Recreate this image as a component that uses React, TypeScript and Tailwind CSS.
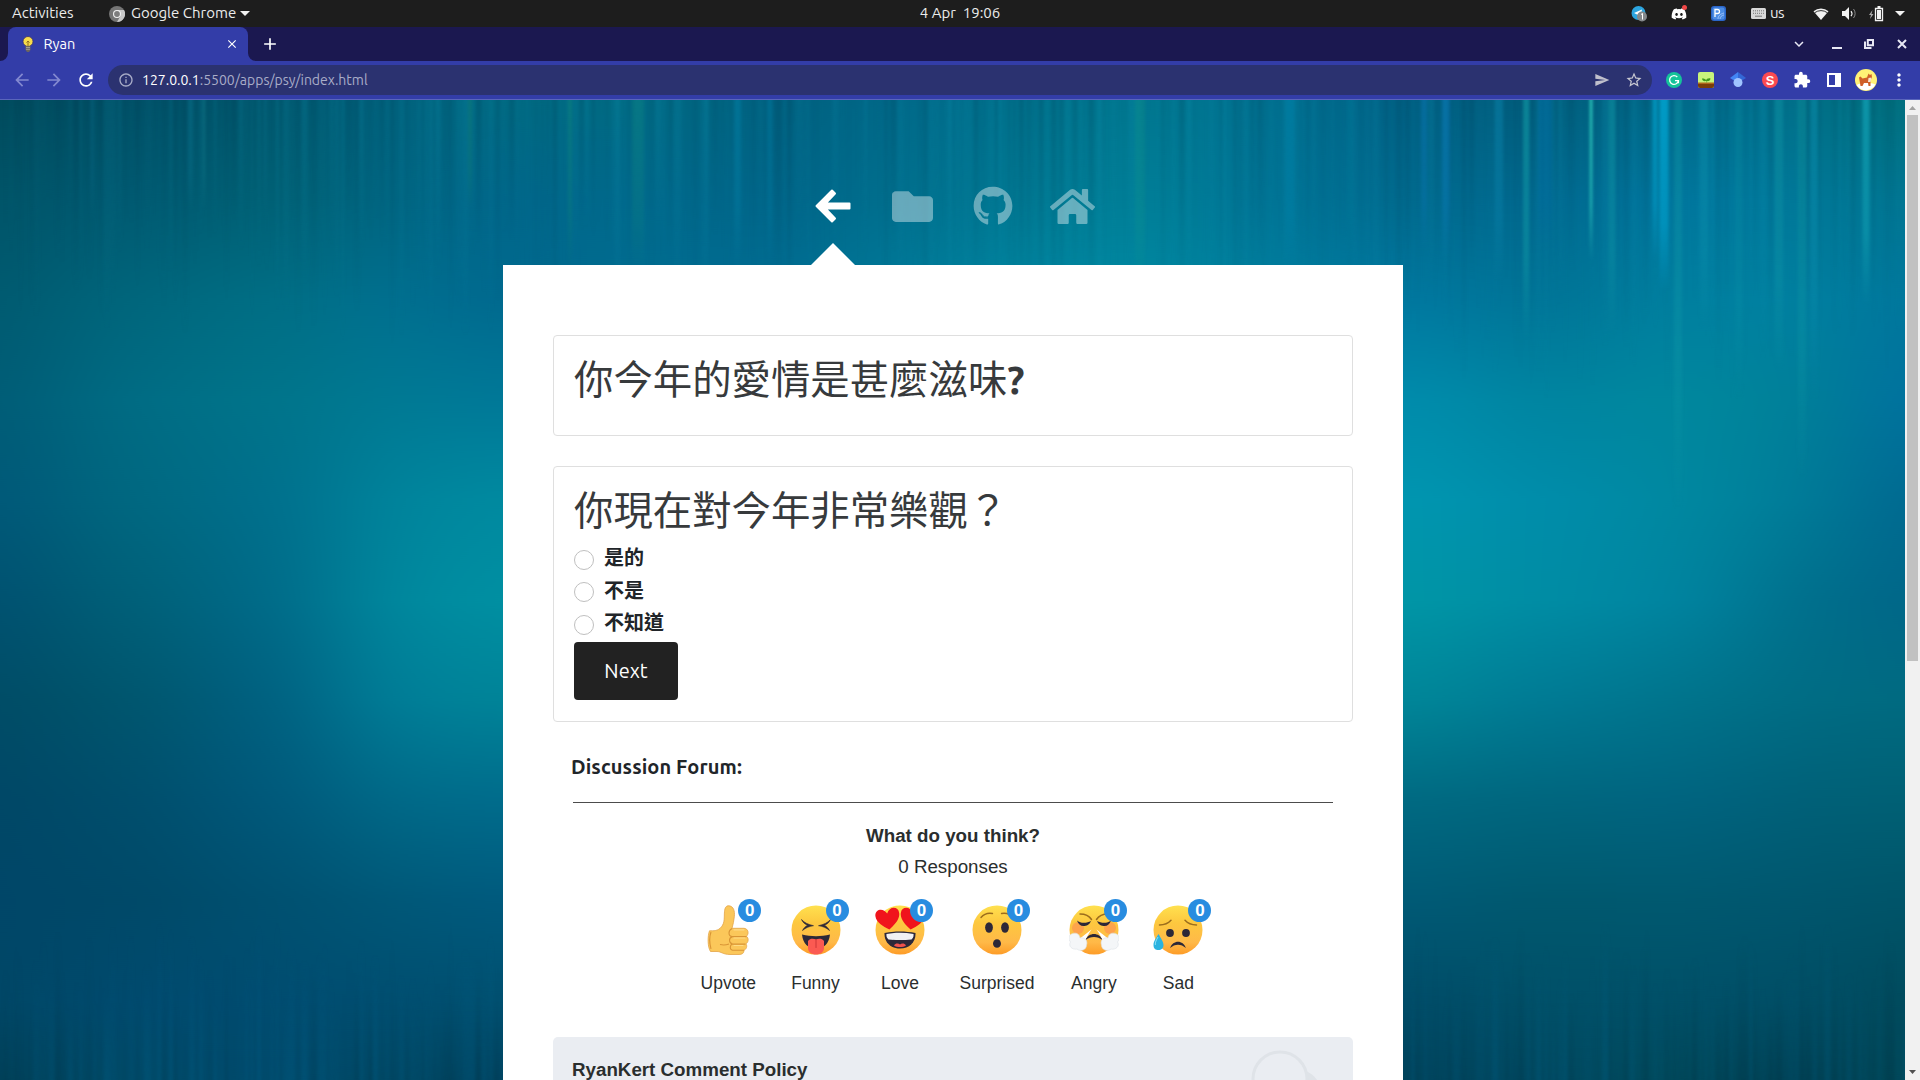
import React from "react";
import { FaFolder, FaGithub, FaHome, FaDiscord } from "react-icons/fa";
import {
  MdArrowBack,
  MdArrowForward,
  MdRefresh,
  MdInfoOutline,
  MdSend,
  MdStarBorder,
  MdExtension,
  MdClose,
  MdAdd,
  MdMoreVert,
  MdExpandMore,
} from "react-icons/md";

const STOPS = [0, 100, 200, 300, 400, 500, 600, 700, 800, 900, 980];

// Colour field of the wallpaper: x position, then one colour per vertical stop.
const FIELD: [number, string][] = [
  [0, "004a5c 005468 005a70 005c76 005878 005170 004c66 004766 004668 004766 004058"],
  [130, "004f66 005a72 00667c 006c84 006880 006078 00566e 004e6c 004968 004a6e 004a68"],
  [270, "00566c 006074 006e84 00748a 006f8c 006a88 006080 00587a 005070 004c70 004a6c"],
  [400, "00607c 006682 007090 007a94 00849c 00889e 007e98 006a88 005878 004e70 004864"],
  [500, "006a82 00668a 00688e 007898 008aa0 0090a2 008498 006c8c 005a7e 005070 003f5a"],
  [640, "006a84 006a8c 006c90 007898 008aa0 0090a2 008498 006c8c 005a7e 005070 003f5a"],
  [780, "005f7e 006488 006d93 007898 008aa0 0090a2 008498 006c8c 005a7e 005070 003f5a"],
  [900, "006a8a 00708e 007b9a 007898 008aa0 0090a2 008498 006c8c 005a7e 005070 003f5a"],
  [1050, "00728c 007a94 0088a2 0088a0 008aa0 0090a2 008498 006c8c 005a7e 005070 003f5a"],
  [1150, "007890 008098 008aa2 0088a4 0090aa 0094a8 008898 006c84 005a78 005070 003f5a"],
  [1260, "007090 007496 007e9e 0088a8 0094b0 0096a8 00889a 006c84 005a78 004e6a 00435c"],
  [1403, "006084 006a8e 0078a0 008cac 0096b0 0096a6 008698 006a82 005a76 004c68 00435c"],
  [1550, "005c7a 00688e 007496 0084a0 008caa 008ca4 007a94 00667e 00586e 005068 004860"],
  [1680, "006c8c 0078a0 0080a0 00889e 0088a0 0084a0 00748c 006480 005970 005068 004a5c"],
  [1800, "00708a 007898 0080a0 008098 007c98 00708c 006c84 006078 00566e 004e66 003f54"],
  [1905, "006c78 007490 00769c 00709e 006890 006688 006a80 006074 005468 004a5c 004858"],
];

// Light streaks falling from the top edge: x, width, length, colour, opacity.
const STREAKS: [number, number, number, string, number][] = [
  [1424, 6, 150, "#0a78b8", 0.45],
  [1446, 8, 160, "#0a78b8", 0.55],
  [1499, 8, 180, "#0a86b0", 0.45],
  [1526, 6, 240, "#12a0a8", 0.55],
  [1545, 14, 150, "#006ca0", 0.6],
  [1591, 2.5, 160, "#30d0c0", 0.95],
  [1612, 7, 235, "#109aa8", 0.5],
  [1655, 5, 160, "#00a0cc", 0.7],
  [1664, 9, 190, "#00a0cc", 0.9],
  [1678, 8, 410, "#12a0ac", 0.35],
  [1704, 8, 230, "#0e96b0", 0.4],
  [1739, 7, 300, "#0a98ac", 0.3],
  [1779, 8, 270, "#10a0b0", 0.45],
  [1802, 8, 380, "#10a0a8", 0.35],
  [1814, 7, 300, "#0c90b0", 0.4],
  [1866, 7, 205, "#10a0b4", 0.75],
  [1140, 10, 190, "#109a90", 0.35],
  [1290, 9, 175, "#0088b0", 0.5],
  [1350, 6, 170, "#0088a8", 0.3],
  [570, 4, 170, "#108878", 0.4],
  [638, 12, 170, "#108878", 0.3],
  [770, 6, 170, "#0080a8", 0.4],
  [738, 7, 160, "#0080a8", 0.4],
  [204, 2, 110, "#148090", 0.6],
  [190, 5, 110, "#0a7490", 0.4],
  [265, 2, 120, "#0a7490", 0.4],
  [92, 3, 120, "#0a7090", 0.4],
  [470, 4, 110, "#128070", 0.4],
];

function noise(i: number) {
  const v = Math.sin(i * 127.1 + 11.7) * 43758.5453;
  return v - Math.floor(v);
}

const FINE = Array.from({ length: 300 }, (_, i) => ({
  x: i * 6.4 + noise(i) * 4,
  w: 2 + noise(i + 500) * 5,
  light: noise(i + 900) > 0.5,
  o: noise(i + 1300) * 0.17,
  len: 100 + noise(i + 1700) * 130 + i * 0.3,
  bo: noise(i + 2100) * 0.18,
  blen: 70 + noise(i + 2500) * 90,
}));

function Wallpaper() {
  return (
    <svg className="absolute inset-0 h-full w-full" viewBox="0 0 1905 980" preserveAspectRatio="none">
      <defs>
        {FIELD.map(([x, c]) => (
          <linearGradient key={x} id={`f${x}`} gradientUnits="userSpaceOnUse" x1="0" y1="0" x2="0" y2="980">
            {c.split(" ").map((k, i) => (
              <stop key={i} offset={STOPS[i] / 980} stopColor={`#${k}`} />
            ))}
          </linearGradient>
        ))}
        <linearGradient id="lt" x1="0" y1="0" x2="0" y2="1">
          <stop offset="0" stopColor="#10a0c0" />
          <stop offset="1" stopColor="#10a0c0" stopOpacity="0" />
        </linearGradient>
        <linearGradient id="dk" x1="0" y1="0" x2="0" y2="1">
          <stop offset="0" stopColor="#003048" />
          <stop offset="1" stopColor="#003048" stopOpacity="0" />
        </linearGradient>
        <linearGradient id="ltu" x1="0" y1="1" x2="0" y2="0">
          <stop offset="0" stopColor="#0070a0" />
          <stop offset="1" stopColor="#0070a0" stopOpacity="0" />
        </linearGradient>
        <linearGradient id="dku" x1="0" y1="1" x2="0" y2="0">
          <stop offset="0" stopColor="#002838" />
          <stop offset="1" stopColor="#002838" stopOpacity="0" />
        </linearGradient>
        {STREAKS.map(([x, , , c]) => (
          <linearGradient key={x} id={`s${x}`} x1="0" y1="0" x2="0" y2="1">
            <stop offset="0" stopColor={c} />
            <stop offset=".65" stopColor={c} stopOpacity=".7" />
            <stop offset="1" stopColor={c} stopOpacity="0" />
          </linearGradient>
        ))}
        <filter id="wide" filterUnits="userSpaceOnUse" x="-200" y="0" width="2305" height="980" colorInterpolationFilters="sRGB">
          <feGaussianBlur stdDeviation="52 0" />
        </filter>
        <filter id="thin" filterUnits="userSpaceOnUse" x="0" y="0" width="1905" height="980" colorInterpolationFilters="sRGB">
          <feGaussianBlur stdDeviation="1.4 0" />
        </filter>
      </defs>
      <g filter="url(#wide)">
        {FIELD.map(([x], i) => {
          const l = i ? (FIELD[i - 1][0] + x) / 2 : -200;
          const r = i < FIELD.length - 1 ? (FIELD[i + 1][0] + x) / 2 : 2105;
          return <rect key={x} x={l} y="0" width={r - l + 1} height="980" fill={`url(#f${x})`} />;
        })}
      </g>
      <g filter="url(#thin)">
        {FINE.map((f, i) => (
          <g key={i}>
            <rect x={f.x} y="0" width={f.w} height={f.len} fill={f.light ? "url(#lt)" : "url(#dk)"} opacity={f.o} />
            <rect x={f.x} y={980 - f.blen} width={f.w} height={f.blen} fill={f.light ? "url(#ltu)" : "url(#dku)"} opacity={f.bo} />
          </g>
        ))}
        {STREAKS.map(([x, w, len, , o]) => (
          <rect key={x} x={x - w / 2} y="0" width={w} height={len} fill={`url(#s${x})`} opacity={o} />
        ))}
      </g>
    </svg>
  );
}

const UB = "font-[Ubuntu,'Noto_Sans','Noto_Sans_CJK_TC',sans-serif]";

function TopBar() {
  return (
    <div className="grid h-[27px] shrink-0 grid-cols-3 items-center bg-[#1d1d1d] text-[15px] text-[#ececec]">
      <div className="flex items-center pl-3">
        <span className="w-[62px] whitespace-nowrap">Activities</span>
        <svg className="ml-[35px] h-4 w-4" viewBox="0 0 16 16">
          <circle cx="8" cy="8" r="8" fill="#757575" />
          <path d="M8 4h7A8 8 0 0 1 8 16l3.5-6z" fill="#c9c9c9" />
          <circle cx="8" cy="8" r="4" fill="#f2f2f2" />
          <circle cx="8" cy="8" r="2.9" fill="#7d7d7d" />
        </svg>
        <span className="ml-[6px] w-[104px] whitespace-nowrap">Google Chrome</span>
        <svg className="ml-[5px] h-[5px] w-[10px]" viewBox="0 0 10 5"><path d="M0 0h10L5 5z" fill="#f2f2f2" /></svg>
      </div>
      <div className="whitespace-pre text-center">{"4 Apr  19:06"}</div>
      <div className="flex items-center justify-end pr-[15px]">
        <svg className="h-4 w-4" viewBox="0 0 16 16">
          <circle cx="7.5" cy="7" r="7" fill="#2ca5e0" />
          <path d="M3 7l8-3.5L9.500 11 6.500 8.800z" fill="#fff" />
          <circle cx="11" cy="10.500" r="5" fill="#85898c" />
          <path d="M10 8.500l1.500-1v6" fill="none" stroke="#fff" strokeWidth="1" />
        </svg>
        <div className="relative ml-6 h-4 w-4">
          <FaDiscord className="h-4 w-4 text-white" />
          <div className="absolute -top-[1px] right-0 h-[5px] w-[5px] rounded-full bg-[#f04747]" />
        </div>
        <svg className="ml-6 h-[15px] w-[15px]" viewBox="0 0 15 15">
          <rect width="15" height="15" rx="3" fill="#2b66c9" />
          <rect x="1.500" y="1.500" width="12" height="12" rx="2" fill="#4c8de4" />
          <path d="M4 11V3.500h2.500a2 2 0 0 1 0 4H4" fill="none" stroke="#fff" strokeWidth="1.300" />
          <path d="M7 13c0-3 2-5 6-6M9 13c0-2 2-4 4-4" stroke="#bcd6ff" strokeWidth=".7" fill="none" />
        </svg>
        <svg className="ml-[25px] h-[11px] w-[15px]" viewBox="0 0 15 11">
          <rect width="15" height="11" rx="1.500" fill="#d8d8d8" />
          <path d="M2 2.800h11M2 5.300h11" stroke="#777" strokeWidth="1" strokeDasharray="1 1" />
          <path d="M4 8.200h7" stroke="#777" />
        </svg>
        <span className="ml-1 w-[14px] tracking-[-0.6px]">us</span>
        <svg className="ml-[29px] h-3 w-4" viewBox="0 0 16 12">
          <path d="M.5 3.200a12 12 0 0 1 15 0L8 12z" fill="#f2f2f2" />
          <path d="M1.700 4.700a10.500 10.500 0 0 1 12.600 0" stroke="#1d1d1d" strokeWidth=".9" fill="none" />
        </svg>
        <svg className="ml-[13px] h-[13px] w-[15px]" viewBox="0 0 15 13">
          <path d="M0 4h3l4-4v13L3 9H0z" fill="#f2f2f2" />
          <path d="M9 4a4 4 0 0 1 0 5" stroke="#f2f2f2" fill="none" strokeWidth="1.200" />
          <path d="M11.500 2a7 7 0 0 1 0 9" stroke="#888" fill="none" />
        </svg>
        <svg className="ml-3 h-4 w-[15px]" viewBox="0 0 15 16">
          <path d="M3.500 4L0 9h2l-1 4 3.500-5H2.500z" fill="#aaa" />
          <path d="M6.500 2.500h7v12h-7z" stroke="#f2f2f2" fill="none" strokeWidth="1.300" />
          <path d="M8 4h4v9H8zM8.500 0h3v2h-3z" fill="#f2f2f2" />
        </svg>
        <svg className="ml-[11px] h-[5px] w-[10px]" viewBox="0 0 10 5"><path d="M0 0h10L5 5z" fill="#f2f2f2" /></svg>
      </div>
    </div>
  );
}

function TabStrip() {
  return (
    <div className="flex h-[34px] shrink-0 items-stretch bg-[#1b1850]">
      <svg className="h-full w-2" viewBox="0 0 8 34"><path d="M8 26v8H0a8 8 0 0 0 8-8" fill="#333da8" /></svg>
      <div className="flex w-[240px] items-center rounded-t-lg bg-[#333da8] pl-[13px] pr-[9px]">
        <svg className="h-4 w-[14px]" viewBox="0 0 14 16">
          <circle cx="7" cy="5.500" r="5" fill="#f8dc4a" stroke="#39306a" strokeWidth=".8" />
          <path d="M5.500 6.500L7 5l1.500 1.500M7 6v4" stroke="#8f6d20" fill="none" />
          <path d="M4.500 10h5v4l-1.500 2H6l-1.500-2z" fill="#6c6560" />
          <path d="M5 11.500h4M5 13.300h4" stroke="#b9b3a8" strokeWidth=".7" />
        </svg>
        <span className="ml-[8.5px] text-[14.500px] text-white">Ryan</span>
        <MdClose className="ml-auto h-3.5 w-3.5 text-white" />
      </div>
      <svg className="h-full w-2" viewBox="0 0 8 34"><path d="M0 26v8h8a8 8 0 0 1-8-8" fill="#333da8" /></svg>
      <div className="flex items-center pl-1"><MdAdd className="h-5 w-5 text-white" /></div>
      <div className="ml-auto flex items-center pr-[13px] text-[#e8e8f4]">
        <MdExpandMore className="h-[18px] w-[18px]" />
        <svg className="ml-6 h-3 w-[10px]" viewBox="0 0 10 12"><path d="M0 10h10" stroke="#e8e8f4" strokeWidth="2" /></svg>
        <svg className="ml-[22px] h-[10px] w-[10px]" viewBox="0 0 10 10">
          <path d="M3.800 1h5.200v5.200H3.800zM1 2.500V9h6.500" fill="none" stroke="#e8e8f4" strokeWidth="2" />
        </svg>
        <svg className="ml-[23px] h-[10px] w-[10px]" viewBox="0 0 10 10"><path d="M1 1l8 8M9 1L1 9" stroke="#e8e8f4" strokeWidth="2" /></svg>
      </div>
    </div>
  );
}

function Toolbar() {
  return (
    <div className="flex h-[39px] shrink-0 items-center border-b border-[#5a66bb] bg-[#333da8] text-white">
      <MdArrowBack className="ml-3 h-5 w-5 text-[#8389d0]" />
      <MdArrowForward className="ml-3 h-5 w-5 text-[#8389d0]" />
      <MdRefresh className="ml-3 h-5 w-5" />
      <div className="ml-[12px] flex h-[30px] w-[1544px] items-center rounded-full bg-[#2b3270] pl-2.5 pr-[9px] text-[#a9adc8]">
        <MdInfoOutline className="h-4 w-4" />
        <span className="ml-2 whitespace-nowrap text-[14px]">
          <span className="text-white">127.0.0.1</span>:5500/apps/psy/index.html
        </span>
        <MdSend className="ml-auto h-4 w-4 text-[#c0c0cc]" />
        <MdStarBorder className="ml-[15px] h-[18px] w-[18px] text-[#c8c8d2]" />
      </div>
      <svg className="ml-[14px] h-4 w-4" viewBox="0 0 16 16">
        <circle cx="8" cy="8" r="8" fill="#15c39a" />
        <path d="M11.300 5A4.400 4.400 0 1 0 12.400 8.600H9M12.400 8.600v2.600" fill="none" stroke="#fff" strokeWidth="1.300" />
      </svg>
      <svg className="ml-4 h-4 w-4" viewBox="0 0 16 16">
        <rect width="16" height="16" rx="2" fill="#c8f47c" />
        <path d="M0 11h16v3a2 2 0 0 1-2 2H2a2 2 0 0 1-2-2z" fill="#7a3d08" />
        <path d="M0 10.500h16v1.500H0z" fill="#b0661c" />
        <path d="M8 10.500V9C6 9.500 4 8.500 4 6.500c2 0 4 .5 4 2 .5-1.800 2.500-2.500 4.500-2C12.500 8.500 10.500 9.500 8.500 9v1.500z" fill="#3f9a1c" />
      </svg>
      <svg className="ml-4 h-4 w-4" viewBox="0 0 16 16">
        <path d="M0 6L8 0v11z" fill="#4285f4" />
        <path d="M8 0l8 6-8 5z" fill="#3367d6" />
        <circle cx="8" cy="10.500" r="4.500" fill="#a0c3ff" />
      </svg>
      <div className="ml-4 flex h-4 w-4 items-center justify-center rounded-full bg-[#fb4a50] font-[Liberation_Sans] text-[13px] font-bold leading-none">S</div>
      <MdExtension className="ml-[15px] h-[18px] w-[18px]" />
      <svg className="ml-4 h-[14px] w-[14px]" viewBox="0 0 14 14"><path d="M0 0h14v14H0zM2 2v10h6V2z" fill="#fff" fillRule="evenodd" /></svg>
      <svg className="ml-[14px] h-[22px] w-[22px]" viewBox="0 0 22 22">
        <circle cx="11" cy="11" r="11" fill="#fff176" />
        <path d="M1.500 16c5-2.500 14-2.500 19-.5A11 11 0 0 1 1.500 16" fill="#fff" />
        <path d="M4 8.500l1.500-1 2 2 4.500-1 1.500-4 1.500 1.500L16.500 5l.5 3.500-1.500 2.500v6h-2l-.5-3H9l-1.500 3h-2L5 14z" fill="#cf5f28" />
        <path d="M13.500 9l3-.5-1 4.500h-2.500z" fill="#f8e4d0" />
      </svg>
      <MdMoreVert className="ml-[12px] h-5 w-5" />
    </div>
  );
}

function Sphere({ children }: { children: React.ReactNode }) {
  return (
    <svg className="h-[50px] w-[50px]" viewBox="0 0 50 50">
      <defs>
        <linearGradient id="face" x1="0" y1="0" x2="0" y2="1">
          <stop offset="0" stopColor="#ffe14f" />
          <stop offset=".35" stopColor="#fdc83f" />
          <stop offset=".75" stopColor="#ffb948" />
          <stop offset="1" stopColor="#fd9c27" />
        </linearGradient>
      </defs>
      <circle cx="25" cy="25" r="24.500" fill="url(#face)" />
      {children}
    </svg>
  );
}

const HEART = "M0 10C-6 6-12 1-12-5-12-12-3-13 0-6 3-13 12-12 12-5 12 1 6 6 0 10z";

const INK = "#2d2838";

function Thumb() {
  return (
    <svg className="h-[50px] w-[50px]" viewBox="0 0 50 50">
      <path
        d="M6.500 25.800c4 0 8.500.4 12-4 3.500-4.500 2.500-9 3-15C21.700 3 23 .5 26 .8c4.500.5 6 5 5.300 11-.4 4-1.300 8-2.300 11.500h12c4 .2 5.500 5 2.500 8 2.500 2 2 6-.5 7.500 1.500 2.500.5 5.300-2 6.500 0 3-2 4.200-5 4.200H27c-7 0-9-3-13-3H7.500C4.500 42 4.500 31 6.500 25.800z"
        fill="#fbc75a" stroke="#e3a547" strokeWidth=".8"
      />
      <path d="M29 23.500c-2 1-3 2.500-3 4.500s1.500 3.500 3.500 3.600h14M29.500 31.600c-4 1-4 6.500 0 7.500h13M29.500 39c-3 1-3 5.500 0 6.200h11.500M17 39.500c4 1 6 .6 9-.5M8 27c-1.500 4-1.500 11 0 17" fill="none" stroke="#d99536" strokeWidth="1.100" />
      <path d="M31 24.800h10M31 33h11M31 40.500h9" stroke="#ffdc86" strokeWidth="1.200" strokeLinecap="round" />
    </svg>
  );
}

const REACTIONS: { label: string; art: React.ReactNode }[] = [
  { label: "Upvote", art: <Thumb /> },
  {
    label: "Funny",
    art: (
      <Sphere>
        <path d="M10.500 14.500c3 3.500 7 5 12 6.200-4 .6-8 2-11 4.800 1.200-2.500 3-4 5-5.300-2.800-1.200-5-3-6-5.700zM39.500 14.500c-3 3.500-7 5-12 6.200 4 .6 8 2 11 4.800-1.200-2.500-3-4-5-5.300 2.800-1.200 5-3 6-5.700z" fill={INK} stroke={INK} strokeWidth=".6" />
        <path d="M11 29.500c9 2.200 19 2.200 28 0-1 9-6 14-14 14s-13-5-14-14z" fill={INK} />
        <path d="M17 36c2-3 6-2.500 8-1.500 2-1 6-1.500 8 1.500v7c0 4-3.500 6.500-8 6.500S17 47 17 43z" fill="#fb5a52" />
        <path d="M25 34.500v8" stroke="#d63c3c" strokeWidth="1.200" strokeLinecap="round" />
      </Sphere>
    ),
  },
  {
    label: "Love",
    art: (
      <Sphere>
        <g transform="translate(13 14.500) rotate(-8)"><path d={HEART} fill="#f0141c" /></g>
        <g transform="translate(37 14.500) rotate(8)"><path d={HEART} fill="#f0141c" /></g>
        <path d="M9.500 28c10-2 21-2 31 0 .5 9-6 15.500-15.500 15.500S9 37 9.500 28z" fill={INK} />
        <path d="M11.500 29c9-1.600 18-1.600 27 0 .3 2.600-.5 4.300-2 5.500-7.500.8-15.500.8-23 0-1.500-1.200-2.300-2.900-2-5.500z" fill="#f1f1f3" />
        <path d="M19 40.500c1.500-2.500 4.500-2.300 6-1 1.500-1.300 4.500-1.500 6 1-3 2-9 2-12 0z" fill="#f0514c" />
      </Sphere>
    ),
  },
  {
    label: "Surprised",
    art: (
      <Sphere>
        <path d="M9 12.500c2.500-3 7-4.800 11.500-4M41 12.500c-2.500-3-7-4.800-11.500-4" fill="none" stroke="#9c6d1d" strokeWidth="1.400" strokeLinecap="round" />
        <ellipse cx="17" cy="22.500" rx="3.900" ry="5.200" fill={INK} />
        <ellipse cx="33" cy="22.500" rx="3.900" ry="5.200" fill={INK} />
        <ellipse cx="25" cy="38.500" rx="4" ry="4.300" fill={INK} />
      </Sphere>
    ),
  },
  {
    label: "Angry",
    art: (
      <Sphere>
        <circle cx="9" cy="23" r="6" fill="#ff6860" opacity=".35" />
        <circle cx="41" cy="23" r="6" fill="#ff6860" opacity=".35" />
        <path d="M11 9c5 0 9 1.500 11.500 5.500M39 9c-5 0-9 1.500-11.500 5.500" fill="none" stroke="#9c6d1d" strokeWidth="1.500" strokeLinecap="round" />
        <path d="M8 15.500c3.500 3 9.500 3 14 .5-1.500 4-4.500 5-7.500 5s-5.500-2-6.500-5.500zM42 15.500c-3.500 3-9.500 3-14 .5 1.500 4 4.500 5 7.500 5s5.500-2 6.500-5.500z" fill={INK} />
        <path d="M22.500 24.500L9 35l7 4c1-5 3-10 6.500-14.500zM27.500 24.500L41 35l-7 4c-1-5-3-10-6.500-14.500z" fill="#fff" />
        <path d="M16.500 35c3-8 14-8 17 0-5-4-12-4-17 0z" fill={INK} />
        <path d="M2.500 29c4-2 8-.5 8.500 4 5-1 8 3 6.500 7 0 5-6 7-9.500 4C3 45-1 41 1.500 37-1 34-.5 30.500 2.500 29zM47.500 29c-4-2-8-.5-8.500 4-5-1-8 3-6.500 7 0 5 6 7 9.500 4 5 1 9-3 6.500-7 2.500-3 2-6.500-1-8z" fill="#f4f6f8" stroke="#dce1e6" strokeWidth=".6" />
      </Sphere>
    ),
  },
  {
    label: "Sad",
    art: (
      <Sphere>
        <path d="M6.500 20c5-.2 8.500-1.500 11.500-4.800M43.500 20c-5-.2-8.500-1.500-11.500-4.800" fill="none" stroke="#9c6d1d" strokeWidth="1.500" strokeLinecap="round" />
        <circle cx="17" cy="28" r="3.900" fill={INK} />
        <circle cx="33" cy="28" r="3.900" fill={INK} />
        <path d="M17 43c3-8.500 13-8.500 16 0-5-4.500-11-4.500-16 0z" fill={INK} />
        <path d="M5.500 29C3 33.500.5 36 .5 40s2.200 5 5 5 5-1.500 5-5-2.500-6.500-5-11z" fill="#2bb3e0" />
        <path d="M5 32c-1.500 3-3 5-2.700 8" stroke="#8be0f5" fill="none" />
      </Sphere>
    ),
  },
];

function Reaction({ label, art }: { label: string; art: React.ReactNode }) {
  return (
    <div className="flex min-w-[50px] flex-col items-center">
      <div className="relative h-[50px] w-[50px]">
        {art}
        <div className="absolute -right-[8px] -top-[6px] flex h-[23px] w-[23px] items-center justify-center rounded-full bg-[#288ce0] text-[17px] font-bold leading-none text-white">
          0
        </div>
      </div>
      <div className="mt-[18px] text-[17.5px] leading-5">{label}</div>
    </div>
  );
}

const OPTIONS = ["是的", "不是", "不知道"];

function Card() {
  return (
    <main className="w-[900px] shrink-0 bg-white px-[50px] pt-[70px]">
      <section className="h-[101px] rounded border border-[#dfdfdf] px-5 pt-5">
        <h1 className="text-[39.400px] font-normal leading-[47px] text-[#373a3c]">你今年的愛情是甚麼滋味<span className="font-bold tracking-tight">?</span></h1>
      </section>
      <section className="mt-[30px] h-[256px] rounded border border-[#dfdfdf] px-5 pt-5">
        <h2 className="text-[39.400px] leading-[47px] text-[#373a3c]">你現在對今年非常樂觀？</h2>
        <div className="mt-2 flex flex-col">
          {OPTIONS.map((o) => (
            <label key={o} className="flex h-[32.500px] items-center text-[20px] font-bold leading-none text-[#212529]">
              <span className="mr-2.5 mt-[3px] h-5 w-5 rounded-full border border-[#bfbfbf] bg-white" />
              {o}
            </label>
          ))}
        </div>
        <button className="mt-[2px] block h-[58px] w-[104px] rounded bg-[#222] text-[20px] text-white">Next</button>
      </section>
      <div className="mx-[18px] mt-[30px] text-[20px] font-bold leading-[30px] tracking-[0.1px] text-[#212529]">Discussion Forum:</div>
      <hr className="mx-5 mt-5 border-t border-[#4c4c4c]" />
      <div className="flex flex-col items-center font-[Liberation_Sans,Arial,sans-serif] text-[18.750px] leading-[30px] text-[#2a2e2e]">
        <div className="mt-[18px] font-bold">What do you think?</div>
        <div className="mt-px">0 Responses</div>
        <div className="mt-[23px] flex gap-[34.500px] pr-[2px]">
          {REACTIONS.map((r) => (
            <Reaction key={r.label} label={r.label} art={r.art} />
          ))}
        </div>
      </div>
      <div className="mt-[44px] flex h-[120px] justify-between rounded-[5px] bg-[#eaedf2] pl-[19px] pr-[32px] font-[Liberation_Sans,Arial,sans-serif] text-[18.750px] font-bold text-[#2a2e2e]">
        <span className="pt-[19px]">RyanKert Comment Policy</span>
        <svg className="mt-[10px] h-[80px] w-[72px]" viewBox="0 0 72 80">
          <path d="M57 24c9 4 14 11 15 20v20H57c3-12 4-26 0-40z" fill="#dfe3e8" />
          <circle cx="31" cy="32" r="27" fill="#eaedf2" stroke="#dfe3e8" strokeWidth="3" />
        </svg>
      </div>
    </main>
  );
}

export default function App() {
  return (
    <div className={`flex h-[1080px] w-[1920px] flex-col overflow-hidden ${UB}`} lang="zh-Hant">
      <TopBar />
      <TabStrip />
      <Toolbar />
      <div className="flex h-[980px]">
        <div className="relative w-[1905px] overflow-hidden">
          <Wallpaper />
          <div className="relative flex h-full flex-col pl-[503px]">
            <nav className="flex h-[143px] shrink-0 items-center pl-[311px] pt-[69px]">
              <svg className="h-[36px] w-[38px] text-white" viewBox="0 0 38 36">
                <path d="M2.500 18L18 2.500l3 3L11.500 15.500h24v5h-24L21 30.500l-3 3z" fill="currentColor" stroke="currentColor" strokeWidth="2" strokeLinejoin="round" />
              </svg>
              <FaFolder className="ml-10 h-[41px] w-[41px] text-white/40" />
              <FaGithub className="ml-10 h-[40px] w-[40px] text-white/40" />
              <FaHome className="ml-[37px] h-[45px] w-[45px] text-white/40" />
            </nav>
            <svg className="ml-[308px] h-[22px] w-[44px] shrink-0" viewBox="0 0 44 22"><path d="M22 0l22 22H0z" fill="#fff" /></svg>
            <Card />
          </div>
        </div>
        <div className="flex w-[15px] flex-col items-center bg-[#f1f1f1]">
          <svg className="mt-[6px] h-1 w-[7px]" viewBox="0 0 7 4"><path d="M0 4h7L3.500 0z" fill="#a3a3a3" /></svg>
          <div className="mt-[5px] h-[546px] w-[11px] bg-[#c1c1c1]" />
          <svg className="mb-[6px] mt-auto h-1 w-[7px]" viewBox="0 0 7 4"><path d="M0 0h7L3.500 4z" fill="#505050" /></svg>
        </div>
      </div>
    </div>
  );
}
